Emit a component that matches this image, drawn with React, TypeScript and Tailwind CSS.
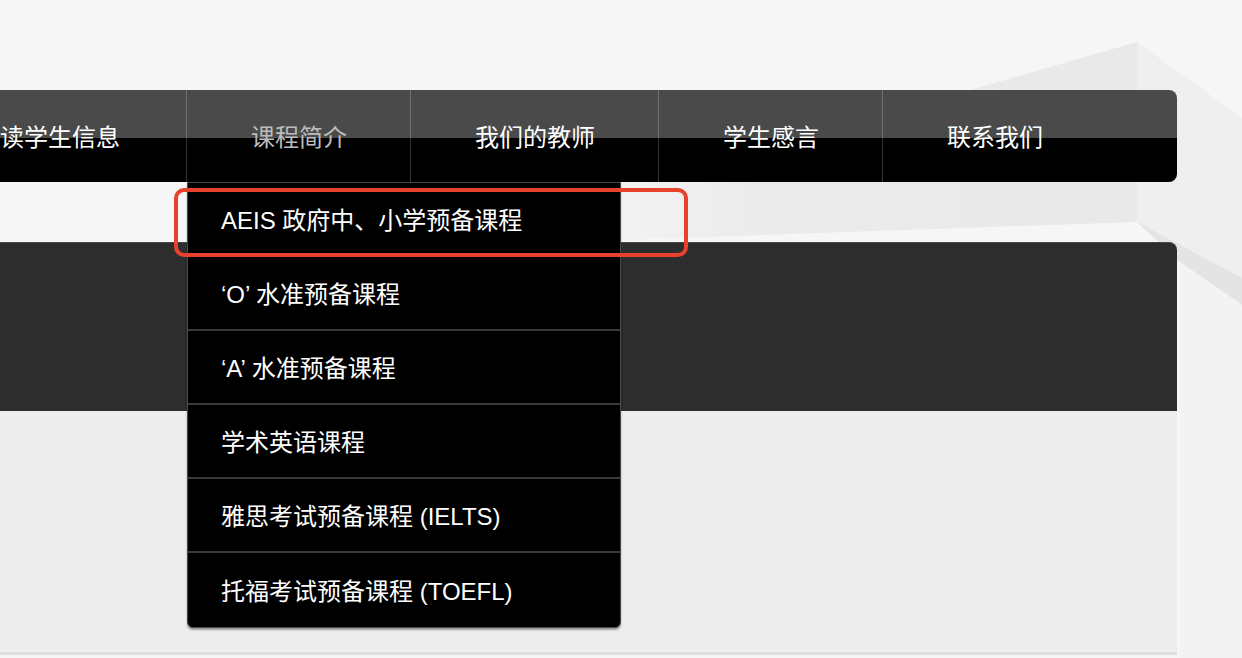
import React from "react";

const font = { fontFamily: '"Liberation Sans", "Noto Sans CJK SC", sans-serif' };

const navItems = [
  { label: "读学生信息", first: true },
  { label: "课程简介", active: true },
  { label: "我们的教师" },
  { label: "学生感言" },
  { label: "联系我们", last: true },
];

const courses = [
  "AEIS 政府中、小学预备课程",
  "‘O’ 水准预备课程",
  "‘A’ 水准预备课程",
  "学术英语课程",
  "雅思考试预备课程 (IELTS)",
  "托福考试预备课程 (TOEFL)",
];

function Backdrop() {
  // faint geometric shapes behind the page
  return (
    <svg className="absolute inset-0 pointer-events-none" width="1242" height="658" viewBox="0 0 1242 658">
      <defs>
        <linearGradient id="fade" x1="0" y1="0" x2="1" y2="0">
          <stop offset="0" stopColor="#f6f6f6" />
          <stop offset="0.35" stopColor="#ebebeb" />
          <stop offset="1" stopColor="#e9e9e9" />
        </linearGradient>
      </defs>
      <polygon points="1137,42 1137,222 560,242 560,182 900,110" fill="url(#fade)" />
      <polygon points="1137,42 1242,118 1242,280 1137,222" fill="#efefef" />
      <polygon points="1137,222 1242,278 1242,305 1180,262" fill="#e4e4e4" />
      <polygon points="1180,262 1242,305 1242,658 1180,658" fill="#f3f3f3" />
    </svg>
  );
}

function CourseMenu() {
  return (
    <div className="absolute left-0 top-full z-10 w-[434px] bg-black border border-[#4a4a4a] rounded-b-[6px] shadow-[0_2px_2px_rgba(0,0,0,0.35)]">
      {courses.map((c, idx) => (
        <div
          key={idx}
          className={`h-[74px] flex items-center pl-[33px] pt-[3px] text-white text-[24px] ${
            idx < courses.length - 1 ? "border-b-2 border-[#3a3a3a]" : ""
          }`}
        >
          {c}
        </div>
      ))}
    </div>
  );
}

export default function App() {
  return (
    <div className="relative w-[1242px] h-[658px] overflow-hidden bg-[#f6f6f6]" style={font}>
      <Backdrop />

      {/* highlight annotation */}
      <div className="absolute left-[174px] top-[188px] w-[514px] h-[69px] border-4 border-[#e8412c] rounded-[10px] z-20" />

      <div className="relative w-[1177px] pt-[90px]">
        {/* Nav */}
        <nav className="relative z-10 flex h-[92px] rounded-r-[8px] bg-[linear-gradient(to_bottom,#4a4a4a_0,#4a4a4a_48px,#000_48px,#000_100%)]">
          {navItems.map((item) => (
            <div
              key={item.label}
              className={`relative flex h-full items-center pt-[3px] text-[24px] ${
                item.first ? "pr-[66px]" : "pl-[64px] pr-[63px]"
              } ${item.last ? "" : "border-r border-white/20"} ${
                item.active ? "text-[#bdbdbd]" : "text-white"
              }`}
            >
              {item.label}
              {item.active && <CourseMenu />}
            </div>
          ))}
        </nav>

        {/* Dark banner */}
        <div className="mt-[60px] h-[169px] bg-[#2d2d2d] border-t border-[#474747] rounded-tr-[8px]" />

        {/* Content */}
        <div className="h-[244px] bg-[#ededed] border-b-[3px] border-[#dedede]" />
      </div>
    </div>
  );
}
